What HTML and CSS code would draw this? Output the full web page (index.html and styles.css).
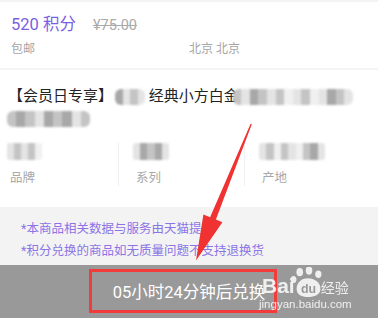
FILE: index.html
```html
<!DOCTYPE html>
<html lang="zh">
<head>
<meta charset="utf-8">
<link rel="stylesheet" href="styles.css">
</head>
<body>
<div class="page">
  <div class="strip"></div>
  <section class="price-card">
    <div class="price-row">
      <span class="points">520 积分</span>
      <span class="orig">¥75.00</span>
    </div>
    <div class="ship-row">
      <span class="ship">包邮</span>
      <span class="loc">北京 北京</span>
    </div>
  </section>
  <div class="gap"></div>
  <section class="product">
    <div class="title">【会员日专享】<span class="blur b1"><i class="d"></i><i class="l"></i><i class="m"></i><i class="l"></i></span> 经典小方白金<span class="blur b2"><i class="m"></i><i class="l"></i><i class="d"></i><i class="m"></i><i class="l"></i><i class="m"></i><i class="x"></i><i class="l"></i><i class="m"></i><i class="x"></i><i class="l"></i><i class="d"></i><i class="m"></i><i class="l"></i></span><br><span class="blur b3"><i class="m"></i><i class="d"></i><i class="m"></i><i class="l"></i><i class="d"></i><i class="m"></i><i class="d"></i><i class="l"></i><i class="m"></i></span></div>
    <div class="attrs">
      <div class="attr first">
        <span class="blur v1"><i class="l"></i><i class="m"></i><i class="l"></i><i class="m"></i><i class="x"></i></span>
        <span class="label">品牌</span>
      </div>
      <div class="attr">
        <span class="blur v2"><i class="l"></i><i class="d"></i><i class="m"></i><i class="d"></i><i class="l"></i></span>
        <span class="label">系列</span>
      </div>
      <div class="attr">
        <span class="blur v3"><i class="l"></i><i class="m"></i><i class="x"></i><i class="m"></i><i class="l"></i><i class="x"></i><i class="m"></i><i class="d"></i><i class="l"></i></span>
        <span class="label">产地</span>
      </div>
    </div>
  </section>
  <section class="notes">
    <p>*本商品相关数据与服务由天猫提供</p>
    <p>*积分兑换的商品如无质量问题不支持退换货</p>
  </section>
  <div class="bar">
    <span class="bar-text">05小时24分钟后兑换</span>
    <div class="redbox"></div>
    <div class="watermark">
      <div class="wm-top">
        <span class="wm-bai">Bai</span>
        <svg class="wm-paw" width="36" height="31" viewBox="0 0 34 30">
          <ellipse cx="9" cy="5" rx="3.2" ry="4" fill="#fff"/>
          <ellipse cx="18" cy="3.5" rx="3.2" ry="4" fill="#fff"/>
          <ellipse cx="27" cy="7" rx="3" ry="3.6" fill="#fff"/>
          <ellipse cx="3" cy="12" rx="2.8" ry="3.4" fill="#fff"/>
          <path d="M6 21 C6 14 12 11 17 11 C23 11 29 15 29 21 C29 27 23 29 17 29 C11 29 6 27 6 21 Z" fill="#fff"/>
          <text x="17.5" y="25" text-anchor="middle" class="wm-du">du</text>
        </svg>
        <span class="wm-jy">经验</span>
      </div>
      <div class="wm-url">jingyan.baidu.com</div>
    </div>
  </div>
  <div class="foot"></div>
  <svg class="arrow" width="378" height="321" viewBox="0 0 378 321">
    <polygon points="251.8,124.3 215.9,219.4 222.4,222.2 196,260.5 203.4,214.4 210.1,217.2 250.6,123.8" fill="#f03232"/>
  </svg>
</div>
</body>
</html>
```

FILE: styles.css
```css
* { box-sizing: border-box; }
html, body { margin: 0; padding: 0; }
body {
  width: 378px;
  height: 321px;
  overflow: hidden;
  background: #fff;
  font-family: Roboto, "Noto Sans CJK SC", sans-serif;
}
.page { position: relative; width: 378px; height: 321px; }
.strip { height: 2px; background: #f3f3f3; }
.price-card {
  height: 66px;
  padding: 12px 0 0 11px;
}
.price-row {
  display: flex;
  align-items: center;
  height: 22px;
}
.points {
  color: #7b5fe3;
  font-size: 16.5px;
  line-height: 22px;
}
.orig {
  margin-left: 17px;
  color: #aaa;
  font-size: 14.5px;
  text-decoration: line-through;
}
.ship-row {
  display: grid;
  grid-template-columns: 178px 1fr;
  margin-top: 5px;
  font-size: 12px;
  line-height: 16px;
  color: #a6a6a6;
}
.gap { height: 2px; background: #f4f4f4; }
.product {
  height: 137px;
  padding-top: 16px;
}
.title {
  padding-left: 8px;
  font-size: 15px;
  line-height: 21px;
  color: #222;
  white-space: nowrap;
}
.blur {
  display: inline-flex;
  vertical-align: middle;
  height: 16px;
  filter: blur(1.3px);
  border-radius: 6px;
  overflow: hidden;
}
.blur i { flex: 1; display: block; }
.blur .l { background: #e4e4e4; }
.blur .m { background: #c4c4c4; }
.blur .d { background: #a8a8a8; }
.blur .x { background: #f0f0f0; }
.b1 { width: 30px; margin-left: 2px; }
.b2 { width: 120px; margin-left: -6px; }
.b3 { width: 83px; margin-left: -1px; margin-top: 2px; }
.attrs {
  display: grid;
  grid-template-columns: 118px 126px 1fr;
  margin-top: 15px;
  height: 43px;
}
.attr {
  display: flex;
  flex-direction: column;
  align-items: flex-start;
  padding-left: 14px;
  border-left: 1px solid #efefef;
}
.attr.first { border-left: none; padding-left: 7px; }
.attr .blur { height: 17px; border-radius: 3px; }
.v1 { width: 35px; }
.v2 { width: 36px; }
.v3 { width: 66px; }
.label {
  margin-top: 10px;
  margin-left: 3px;
  font-size: 12.5px;
  line-height: 16px;
  color: #a8a8a8;
}
.notes {
  height: 58px;
  background: #f3f3f3;
  padding: 11px 0 0 21px;
}
.notes p {
  margin: 0;
  font-size: 12.5px;
  line-height: 22px;
  color: #8c74e6;
  white-space: nowrap;
}
.bar {
  position: relative;
  height: 53px;
  background: #999;
  display: flex;
  align-items: center;
  justify-content: center;
}
.bar-text {
  color: #fff;
  font-size: 16.5px;
  line-height: 22px;
  margin-top: 2px;
}
.redbox {
  position: absolute;
  left: 89px;
  top: 4px;
  width: 188px;
  height: 44px;
  border: 3px solid #f23b3b;
}
.watermark {
  position: absolute;
  left: 259px;
  top: 2px;
  opacity: 0.85;
  color: #fff;
}
.wm-top { display: flex; align-items: flex-end; height: 30px; }
.wm-bai {
  font-family: "Liberation Sans", Arial, sans-serif;
  font-weight: bold;
  font-size: 21px;
  line-height: 22px;
  margin-left: 3px;
}
.wm-paw { margin-left: -5px; margin-bottom: -1px; }
.wm-du {
  font-family: "Liberation Sans", Arial, sans-serif;
  font-weight: bold;
  font-size: 12px;
  fill: #999;
}
.wm-jy {
  font-family: "Noto Sans CJK SC", sans-serif;
  font-size: 14px;
  line-height: 20px;
  margin-left: -5px;
}
.wm-url {
  font-family: "Liberation Sans", Arial, sans-serif;
  font-size: 11.5px;
  line-height: 14px;
}
.foot { height: 3px; background: #fff; }
.arrow { position: absolute; left: 0; top: 0; pointer-events: none; }
```
